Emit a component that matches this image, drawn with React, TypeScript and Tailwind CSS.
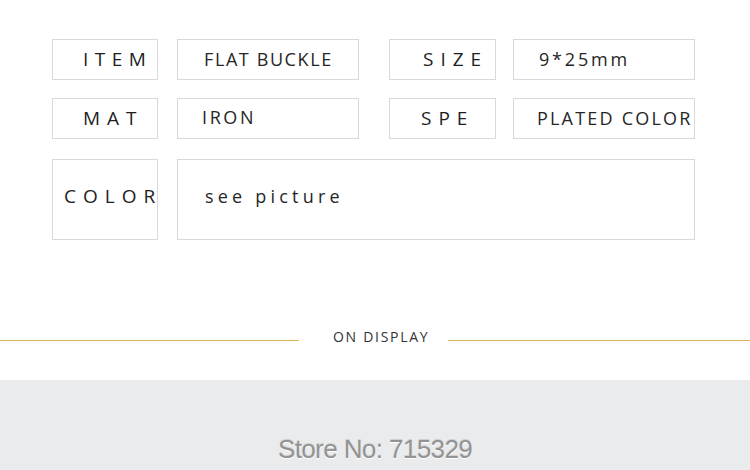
const font = { fontFamily: '"Open Sans", "Noto Sans", sans-serif' };

function Label({ text, pl, ls = "tracking-[7px]", w = "w-[106px]" }: { text: string; pl: string; ls?: string; w?: string }) {
  return (
    <div className={`${w} h-[41px] border border-[#d9d9d9] flex items-center ${pl} text-[19px] ${ls} text-[#1e1e1e] whitespace-nowrap`}>
      {text}
    </div>
  );
}

function Value({ text, pl, w = "w-[182px]", h = "h-[41px]", extra = "" }: { text: string; pl: string; w?: string; h?: string; extra?: string }) {
  return (
    <div className={`${w} ${h} border border-[#d9d9d9] flex items-center ${pl} text-[18px] text-[#262626] whitespace-nowrap overflow-hidden ${extra}`}>
      {text}
    </div>
  );
}

export default function App() {
  return (
    <div className="w-[750px] h-[470px] bg-white overflow-hidden flex flex-col" style={font}>
      {/* spec table */}
      <div className="pt-[39px] pl-[52px] flex flex-col">
        <div className="flex">
          <Label text="ITEM" pl="pl-[30px]" ls="tracking-[6.5px]" />
          <div className="w-[19px]" />
          <Value text="FLAT BUCKLE" pl="pl-[26px]" extra="tracking-[1.6px]" />
          <div className="w-[30px]" />
          <Label text="SIZE" pl="pl-[33px]" w="w-[107px]" />
          <div className="w-[17px]" />
          <Value text="9*25mm" pl="pl-[25px]" extra="tracking-[2.8px] text-[#555]" />
        </div>
        <div className="flex mt-[18px]">
          <Label text="MAT" pl="pl-[30px]" />
          <div className="w-[19px]" />
          <Value text="IRON" pl="pl-[24px]" extra="tracking-[2.6px] pb-[2px]" />
          <div className="w-[30px]" />
          <Label text="SPE" pl="pl-[31px]" w="w-[107px]" />
          <div className="w-[17px]" />
          <Value text="PLATED COLOR" pl="pl-[23px]" extra="tracking-[2.2px]" />
        </div>
        <div className="flex mt-[20px]">
          <div className="w-[106px] h-[81px] border border-[#d9d9d9] flex items-center pl-[11px] pb-[7px] text-[19px] tracking-[7px] text-[#1e1e1e] whitespace-nowrap">
            COLOR
          </div>
          <div className="w-[19px]" />
          <Value text="see picture" pl="pl-[27px]" w="w-[518px]" h="h-[81px]" extra="tracking-[4.2px] pb-[6px]" />
        </div>
      </div>

      {/* divider */}
      <div className="mt-[84px] flex items-center h-[24px]">
        <div className="w-[299px] h-px bg-[#d8b550] mt-[8px]" />
        <div className="w-[149px] pl-[34px] text-[14px] tracking-[1.7px] text-[#333] whitespace-nowrap">
          ON DISPLAY
        </div>
        <div className="flex-1 h-px bg-[#d8b550] mt-[8px]" />
      </div>

      {/* store band */}
      <div className="mt-[32px] flex-1 bg-[#e9ebec] flex justify-center pt-[56px]">
        <span
          className="text-[26px] leading-none tracking-[-0.6px] text-[#939393] [text-shadow:0_1px_0_#fdfdfd,0_-1px_0_#cfcfcf]"
          style={{ fontFamily: '"Liberation Sans", Arial, sans-serif' }}
        >
          Store No: 715329
        </span>
      </div>
    </div>
  );
}
